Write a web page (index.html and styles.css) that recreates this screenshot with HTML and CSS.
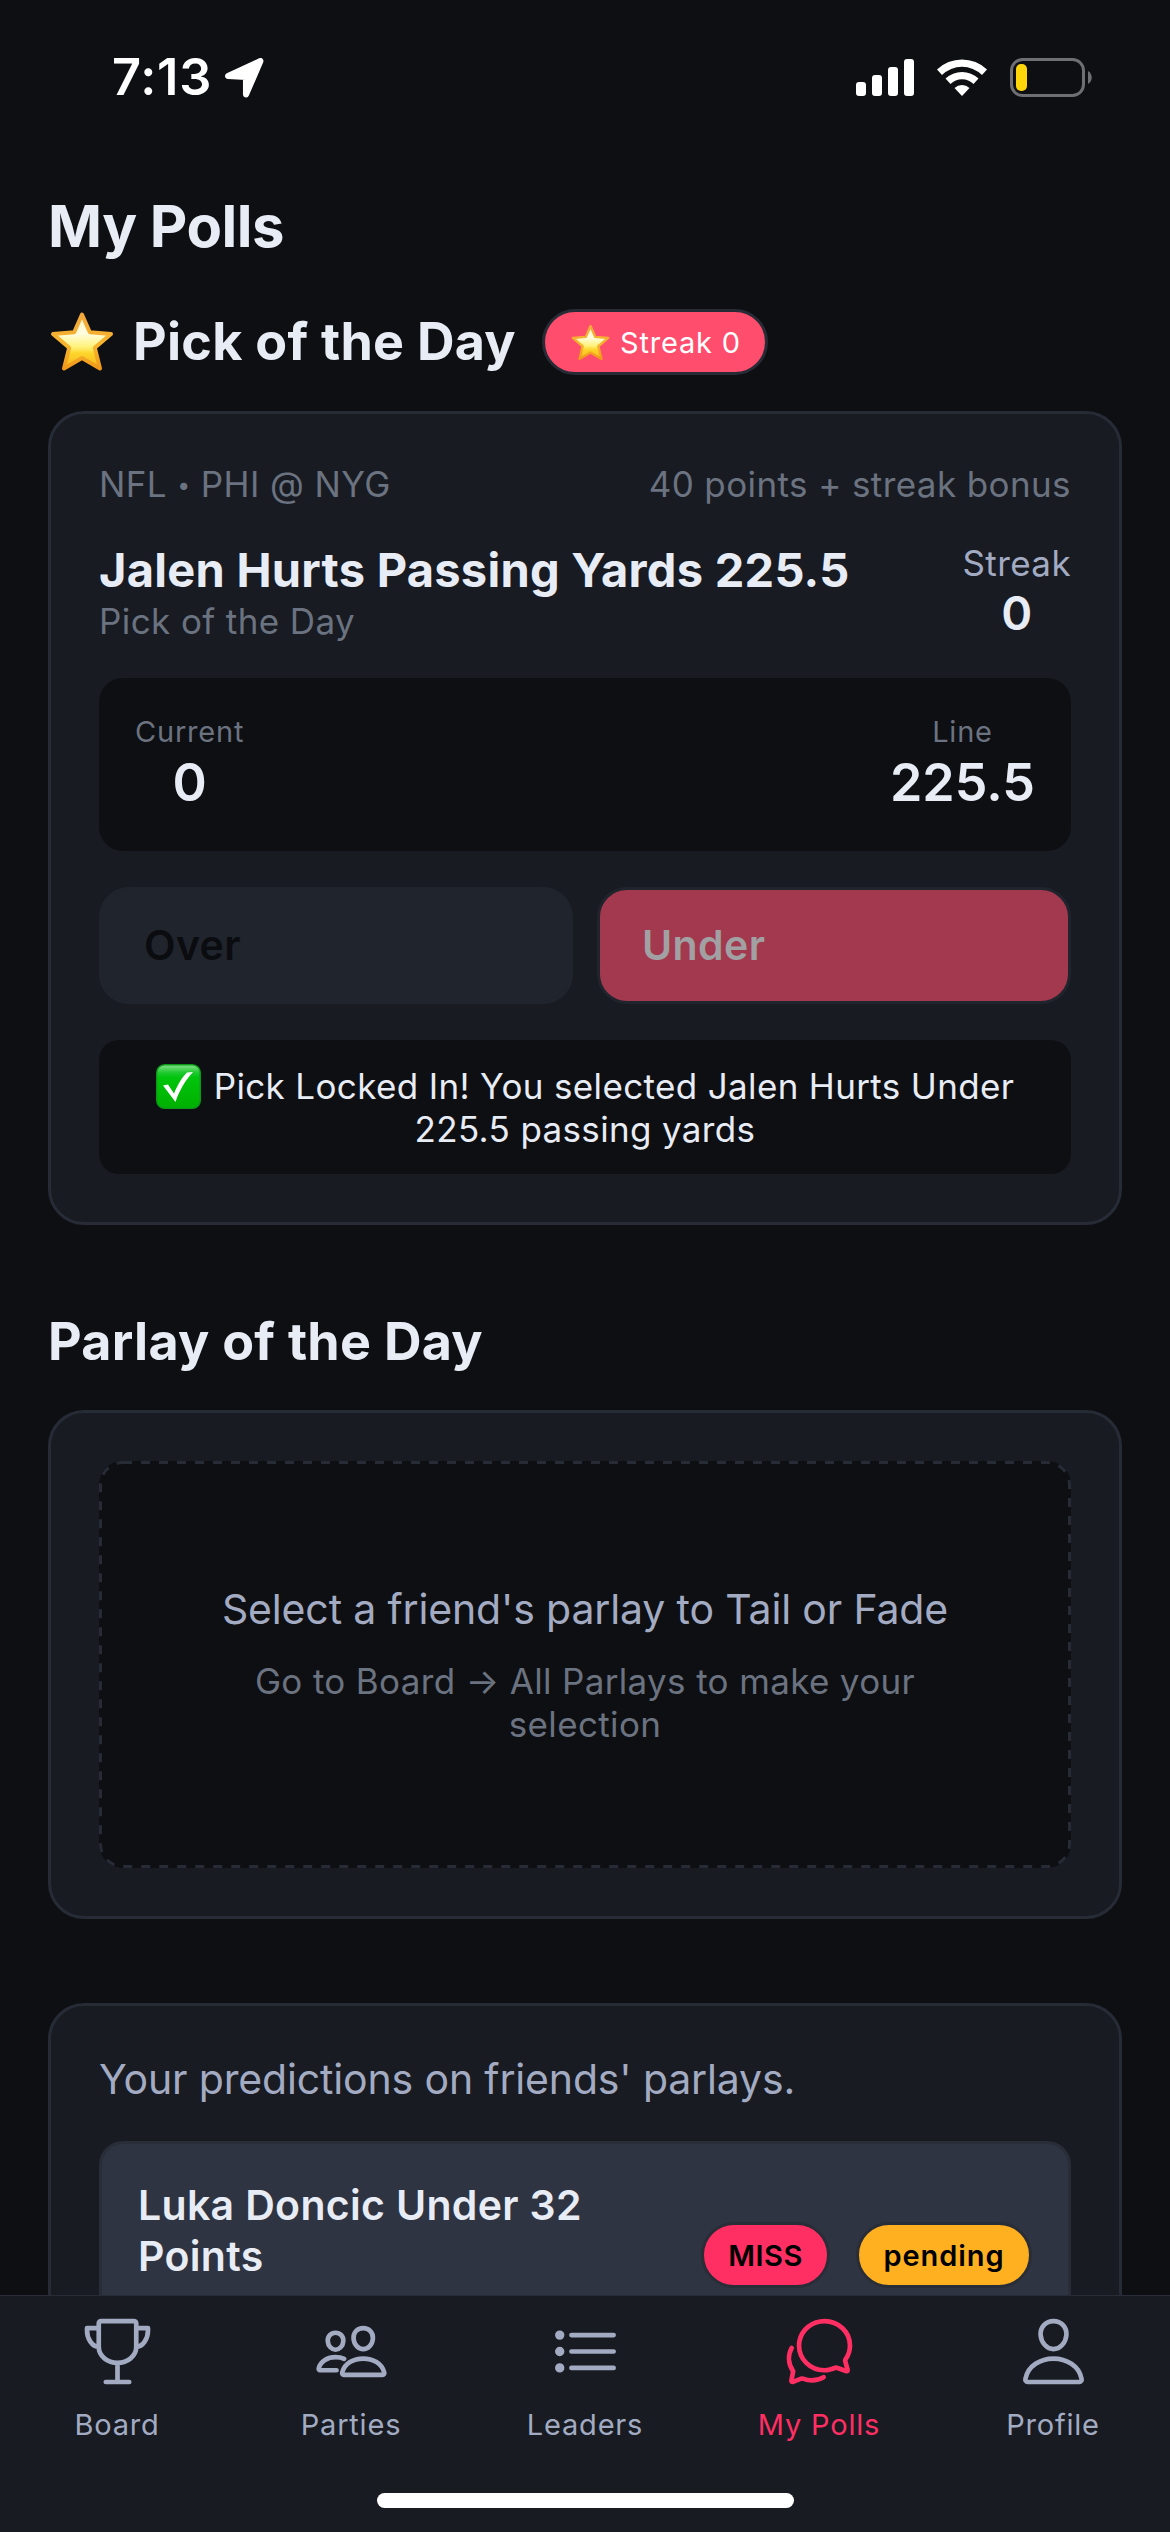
FILE: index.html
```html
<!DOCTYPE html>
<html lang="en">
<head>
<meta charset="utf-8">
<title>My Polls</title>
<link rel="stylesheet" href="styles.css">
</head>
<body>
<svg class="defs" width="0" height="0" aria-hidden="true">
  <defs>
    <linearGradient id="star-fill" x1="0" y1="0" x2="0" y2="1">
      <stop offset="0" stop-color="#fff3c4"/>
      <stop offset=".35" stop-color="#fffde0"/>
      <stop offset=".6" stop-color="#fff27a"/>
      <stop offset=".72" stop-color="#fdd52b"/>
      <stop offset="1" stop-color="#f9b51c"/>
    </linearGradient>
    <linearGradient id="star-edge" x1="0" y1="0" x2="0" y2="1">
      <stop offset="0" stop-color="#f2a83a"/>
      <stop offset=".6" stop-color="#f7b52c"/>
      <stop offset="1" stop-color="#f0981b"/>
    </linearGradient>
    <linearGradient id="check-fill" x1="0" y1="0" x2="0" y2="1">
      <stop offset="0" stop-color="#8be08f"/>
      <stop offset=".18" stop-color="#1fc930"/>
      <stop offset=".3" stop-color="#00c40c"/>
      <stop offset="1" stop-color="#00b000"/>
    </linearGradient>
    <symbol id="star" viewBox="0 0 64 60">
      <path d="M32 3 L39.8 20.8 L61 22.5 L44.8 36.2 L50 57 L32 46.5 L14 57 L19.2 36.2 L3 22.5 L24.2 20.8 Z" fill="url(#star-fill)" stroke="url(#star-edge)" stroke-width="4" stroke-linejoin="round"/>
    </symbol>
  </defs>
</svg>
<div class="screen">
  <header class="status">
    <div class="status-left">
      <span class="time">7:13</span>
      <svg class="location" viewBox="0 0 40 40"><path d="M4 17.500L35.500 3L21.500 35.500V18.500Z" fill="#fff" stroke="#fff" stroke-width="6" stroke-linejoin="round"/></svg>
    </div>
    <div class="status-right">
      <svg class="signal" viewBox="0 0 58 37" fill="#fff"><rect x="0" y="23" width="10" height="14" rx="3"/><rect x="16" y="16" width="10" height="21" rx="3"/><rect x="32" y="8" width="10" height="29" rx="3"/><rect x="48" y="0" width="10" height="37" rx="3"/></svg>
      <svg class="wifi" viewBox="0 0 52 37" fill="#fff"><path d="M1 10.500A36 36 0 0 1 51 10.500L46 16A28.500 28.500 0 0 0 6 16Z"/><path d="M9.500 19.500A24 24 0 0 1 42.500 19.500L37.500 25A16.500 16.500 0 0 0 14.500 25Z"/><path d="M18.500 29A11 11 0 0 1 33.500 29L26 37Z"/></svg>
      <svg class="battery" viewBox="0 0 82 39"><rect x="1.500" y="1.500" width="72" height="36" rx="11" fill="none" stroke="#6e6f72" stroke-width="3"/><rect x="6" y="6" width="11" height="27" rx="5" fill="#ffd60a"/><path d="M78 13c5 3 5 10 0 13z" fill="#6e6f72"/></svg>
    </div>
  </header>

  <main class="content">
    <h1 class="page-title">My Polls</h1>
    <div class="section-head">
      <svg class="star-lg"><use href="#star"/></svg>
      <h2 class="heading pick-heading">Pick of the Day</h2>
      <span class="streak-badge"><svg class="star-sm"><use href="#star"/></svg>Streak 0</span>
    </div>

    <section class="card">
      <div class="row meta"><span class="matchup">NFL <span class="bullet">•</span> PHI @ NYG</span><span class="bonus">40 points + streak bonus</span></div>
      <div class="row pick">
        <div>
          <h3 class="pick-title">Jalen Hurts Passing Yards 225.5</h3>
          <p class="pick-sub">Pick of the Day</p>
        </div>
        <div class="streak">
          <span class="streak-label">Streak</span>
          <span class="streak-value">0</span>
        </div>
      </div>
      <div class="row stats">
        <div class="stat"><span class="stat-label">Current</span><span class="stat-value">0</span></div>
        <div class="stat"><span class="stat-label">Line</span><span class="stat-value">225.5</span></div>
      </div>
      <div class="choices">
        <div class="choice over">Over</div>
        <div class="choice under">Under</div>
      </div>
      <p class="locked"><svg class="check" viewBox="0 0 45 45"><rect x=".7" y=".7" width="43.600" height="43.600" rx="8" fill="url(#check-fill)" stroke="#0a9a18" stroke-width="1.400"/><path d="M7 21.500L12 20.500L18 29.500C22 20 26 13.500 31 8.500L37 8C30 15.500 23.500 26 19.500 38Z" fill="#fff"/></svg>Pick Locked In! You selected Jalen Hurts Under<br>225.5 passing yards</p>
    </section>

    <h2 class="heading parlay-heading">Parlay of the Day</h2>
    <section class="card">
      <div class="empty">
        <svg class="dashes"><rect x="1.500" y="1.500" width="969" height="404" rx="22.500"/></svg>
        <p class="empty-title">Select a friend's parlay to Tail or Fade</p>
        <p class="empty-hint">Go to Board → All Parlays to make your<br>selection</p>
      </div>
    </section>

    <section class="card predictions">
      <p class="lead">Your predictions on friends' parlays.</p>
      <div class="prediction">
        <h3 class="prediction-title">Luka Doncic Under 32<br>Points</h3>
        <div class="tags"><span class="tag miss">MISS</span><span class="tag pending">pending</span></div>
      </div>
    </section>
  </main>

  <nav class="tabs">
    <div class="tab-row">
      <a class="tab"><svg class="icon" viewBox="0 0 512 512"><path d="M176 464h160M256 464V336M128 64a16 16 0 0 1 16-16h224a16 16 0 0 1 16 16v160c0 64-60 110-128 110S128 288 128 224ZM128 96H48v16c0 55.200 33.500 112 80 112M384 96h80v16c0 55.200-33.500 112-80 112"/></svg><span>Board</span></a>
      <a class="tab"><svg class="icon" viewBox="0 0 512 512"><path d="M402 168c-2.930 40.670-33.100 72-66 72s-63.120-31.320-66-72c-3-42.310 26.370-72 66-72s69 30.460 66 72z"/><path d="M336 304c-65.170 0-127.840 32.370-143.540 95.410-2.080 8.340 3.150 16.590 11.720 16.590h263.650c8.570 0 13.770-8.250 11.720-16.590C463.850 335.360 401.180 304 336 304z"/><path d="M200 185.940c-2.340 32.480-26.720 58.060-53 58.060s-50.700-25.570-53-58.060C91.610 152.150 115.340 128 147 128s55.390 24.770 53 57.940z"/><path d="M206 306c-18.050-8.270-37.930-11.450-59-11.450-52 0-102.100 25.850-114.650 76.200-1.650 6.660 2.530 13.250 9.370 13.250H154"/></svg><span>Parties</span></a>
      <a class="tab"><svg class="icon" viewBox="0 0 512 512"><path d="M160 144h288M160 256h288M160 368h288"/><circle cx="80" cy="144" r="16"/><circle cx="80" cy="256" r="16"/><circle cx="80" cy="368" r="16"/></svg><span>Leaders</span></a>
      <a class="tab active"><svg class="icon" viewBox="0 0 512 512"><path d="M431 320.600c-1-3.600 1.200-8.600 3.300-12.200a33.680 33.680 0 0 1 2.100-3.100A162 162 0 0 0 464 215c.3-92.200-77.500-167-173.700-167-83.900 0-153.900 57.100-170.300 132.900a160.700 160.700 0 0 0-3.700 34.200c0 92.300 74.800 169.100 171 169.100 15.300 0 35.900-4.600 47.200-7.700s22.500-7.200 25.400-8.300a26.440 26.440 0 0 1 9.300-1.700 26 26 0 0 1 10.100 2l56.700 20.100a13.520 13.520 0 0 0 3.900 1 8 8 0 0 0 8-8 12.850 12.850 0 0 0-.5-2.700z"/><path d="M66.460 232a146.230 146.230 0 0 0 6.390 152.670c2.310 3.490 3.610 6.190 3.210 8s-11.930 61.870-11.930 61.870a8 8 0 0 0 2.710 7.680A8.170 8.170 0 0 0 72 464a7.260 7.260 0 0 0 2.910-.6l56.210-22a15.700 15.700 0 0 1 12 .2c18.940 7.380 39.880 12 60.830 12A159.210 159.210 0 0 0 284 432.110"/></svg><span>My Polls</span></a>
      <a class="tab"><svg class="icon" viewBox="0 0 512 512"><path d="M344 144c-3.920 52.870-44 96-88 96s-84.150-43.120-88-96c-4-55 35-96 88-96s92 42 88 96z"/><path d="M256 304c-87 0-175.300 48-191.640 138.600C62.390 453.520 68.570 464 80 464h352c11.440 0 17.620-10.480 15.650-21.400C431.300 352 343 304 256 304z"/></svg><span>Profile</span></a>
    </div>
    <div class="home-indicator"></div>
  </nav>
</div>
</body>
</html>
```
FILE: styles.css
```css
* { box-sizing: border-box; margin: 0; padding: 0; }

body {
  background: #0e0f13;
  color: #e8ecf5;
  font-family: Inter, "Liberation Sans", sans-serif;
}

.defs { display: block; height: 0; }

.screen {
  display: flex;
  flex-direction: column;
  width: 1170px;
  height: 2532px;
  overflow: hidden;
}

/* Status bar */
.status {
  display: flex;
  flex: none;
  justify-content: space-between;
  height: 141px;
  padding: 58px 78px 0 112px;
  color: #fff;
}
.status-left, .status-right { display: flex; align-items: flex-start; }
.time { width: 112px; margin-top: -11px; font-size: 50.500px; line-height: 60px; font-weight: 600; letter-spacing: 0.8px; }
.location { width: 41px; height: 41px; }
.signal { width: 58px; height: 37px; margin: 1px 22px 0 0; }
.wifi { width: 52px; height: 37px; margin: 1px 22px 0 0; }
.battery { width: 82px; height: 39px; }

/* Scrolling content */
.content { flex: 1; min-height: 0; overflow: hidden; padding: 49px 48px 0; }
.page-title { font-size: 58px; line-height: 72px; font-weight: 700; letter-spacing: -0.5px; }
.section-head { display: flex; align-items: center; height: 66px; margin: 47px 0 36px; }
.star-lg { width: 64px; height: 61px; margin: -2px 19px 0 2px; }
.heading { font-size: 52px; line-height: 66px; font-weight: 700; letter-spacing: 0.28px; }
.pick-heading { width: 409px; white-space: nowrap; }
.streak-badge {
  display: flex;
  align-items: center;
  width: 226px;
  height: 66px;
  padding-left: 26px;
  border: 3px solid #262b36;
  border-radius: 33px;
  background: #ff4d6d;
  color: #fff;
  font-size: 29px;
  letter-spacing: 0.8px;
  white-space: nowrap;
}
.star-sm { width: 39px; height: 37px; margin-right: 10px; }

.card {
  padding: 48px;
  border: 3px solid #262b36;
  border-radius: 36px;
  background: #181b22;
}
.row { display: flex; justify-content: space-between; }
.meta, .pick-sub { color: #6b7280; font-size: 35px; line-height: 45px; letter-spacing: 0.4px; }
.bullet { font-size: 23px; line-height: 1; vertical-align: 4px; }
.pick { margin: 34px 0; }
.pick-title { font-size: 47px; line-height: 58px; font-weight: 700; letter-spacing: 0.25px; }
.streak { display: flex; flex-direction: column; align-items: center; }
.streak-label { color: #a3abc2; font-size: 35px; line-height: 45px; letter-spacing: 0.4px; }
.streak-value { font-size: 47px; line-height: 54px; font-weight: 600; }

.stats { height: 173px; padding: 36px; border-radius: 24px; background: #0e0f13; }
.stat { display: flex; flex-direction: column; align-items: center; }
.stat-label { color: #6b7280; font-size: 29px; line-height: 36px; letter-spacing: 0.8px; }
.stat-value { font-size: 52px; line-height: 66px; font-weight: 600; }

.choices { display: grid; grid-template-columns: 1fr 1fr; gap: 24px; margin: 36px 0; }
.choice {
  display: flex;
  align-items: center;
  height: 117px;
  padding: 0 0 1px 42px;
  border: 3px solid #20242c;
  border-radius: 30px;
  font-size: 41px;
  font-weight: 600;
  letter-spacing: 0.4px;
}
.over { background: #20242c; color: #0b0c10; }
.under { background: #a3394f; color: #a1a1a3; }

.locked {
  height: 134px;
  padding-top: 25px;
  border-radius: 20px;
  background: #0e0f13;
  font-size: 35px;
  line-height: 43px;
  letter-spacing: 0.35px;
  text-align: center;
}
.check { width: 45px; height: 45px; margin: -4px 13px -10px 0; vertical-align: baseline; }

.parlay-heading { margin: 84px 0 35px; }
.empty {
  position: relative;
  height: 407px;
  padding-top: 123px;
  border-radius: 24px;
  background: #0e0f13;
  text-align: center;
}
.dashes { position: absolute; inset: 0; width: 100%; height: 100%; fill: none; stroke: #262b36; stroke-width: 3; stroke-dasharray: 9 9; }
.empty-title { color: #a3abc2; font-size: 41px; line-height: 50px; letter-spacing: -0.15px; }
.empty-hint { margin-top: 26px; color: #6b7280; font-size: 35px; line-height: 43px; letter-spacing: 0.35px; }

.predictions { height: 400px; margin-top: 84px; }
.lead { color: #a3abc2; font-size: 41px; line-height: 50px; letter-spacing: -0.15px; }
.prediction {
  display: flex;
  justify-content: space-between;
  align-items: flex-start;
  height: 300px;
  margin-top: 37px;
  padding: 36px;
  border: 3px solid #282d37;
  border-radius: 24px;
  background: #2f3442;
}
.prediction-title { font-size: 41px; line-height: 51px; font-weight: 600; letter-spacing: 0.33px; white-space: nowrap; }
.tags { display: flex; gap: 26px; margin-top: 42px; }
.tag {
  display: flex;
  align-items: center;
  justify-content: center;
  height: 66px;
  border: 3px solid #282d37;
  border-radius: 33px;
  color: #000;
  font-size: 29px;
  font-weight: 600;
  letter-spacing: 0.9px;
}
.miss { width: 129px; background: #ff2e63; letter-spacing: 0.5px; }
.pending { width: 176px; background: #ffb020; }

/* Tab bar */
.tabs {
  display: flex;
  flex: none;
  flex-direction: column;
  align-items: center;
  justify-content: space-between;
  height: 237px;
  padding: 18px 0 24px;
  border-top: 1px solid #282c36;
  background: #181b22;
}
.tab-row { display: grid; grid-template-columns: repeat(5, 1fr); width: 100%; }
.tab { display: flex; flex-direction: column; align-items: center; gap: 18px; color: #a3abc2; font-size: 29px; line-height: 36px; letter-spacing: 0.8px; }
.active { color: #ff2e63; }
.icon { width: 75px; height: 75px; fill: none; stroke: currentColor; stroke-width: 32; stroke-linecap: round; stroke-linejoin: round; }
.home-indicator { width: 417px; height: 15px; border-radius: 8px; background: #fff; }
```
